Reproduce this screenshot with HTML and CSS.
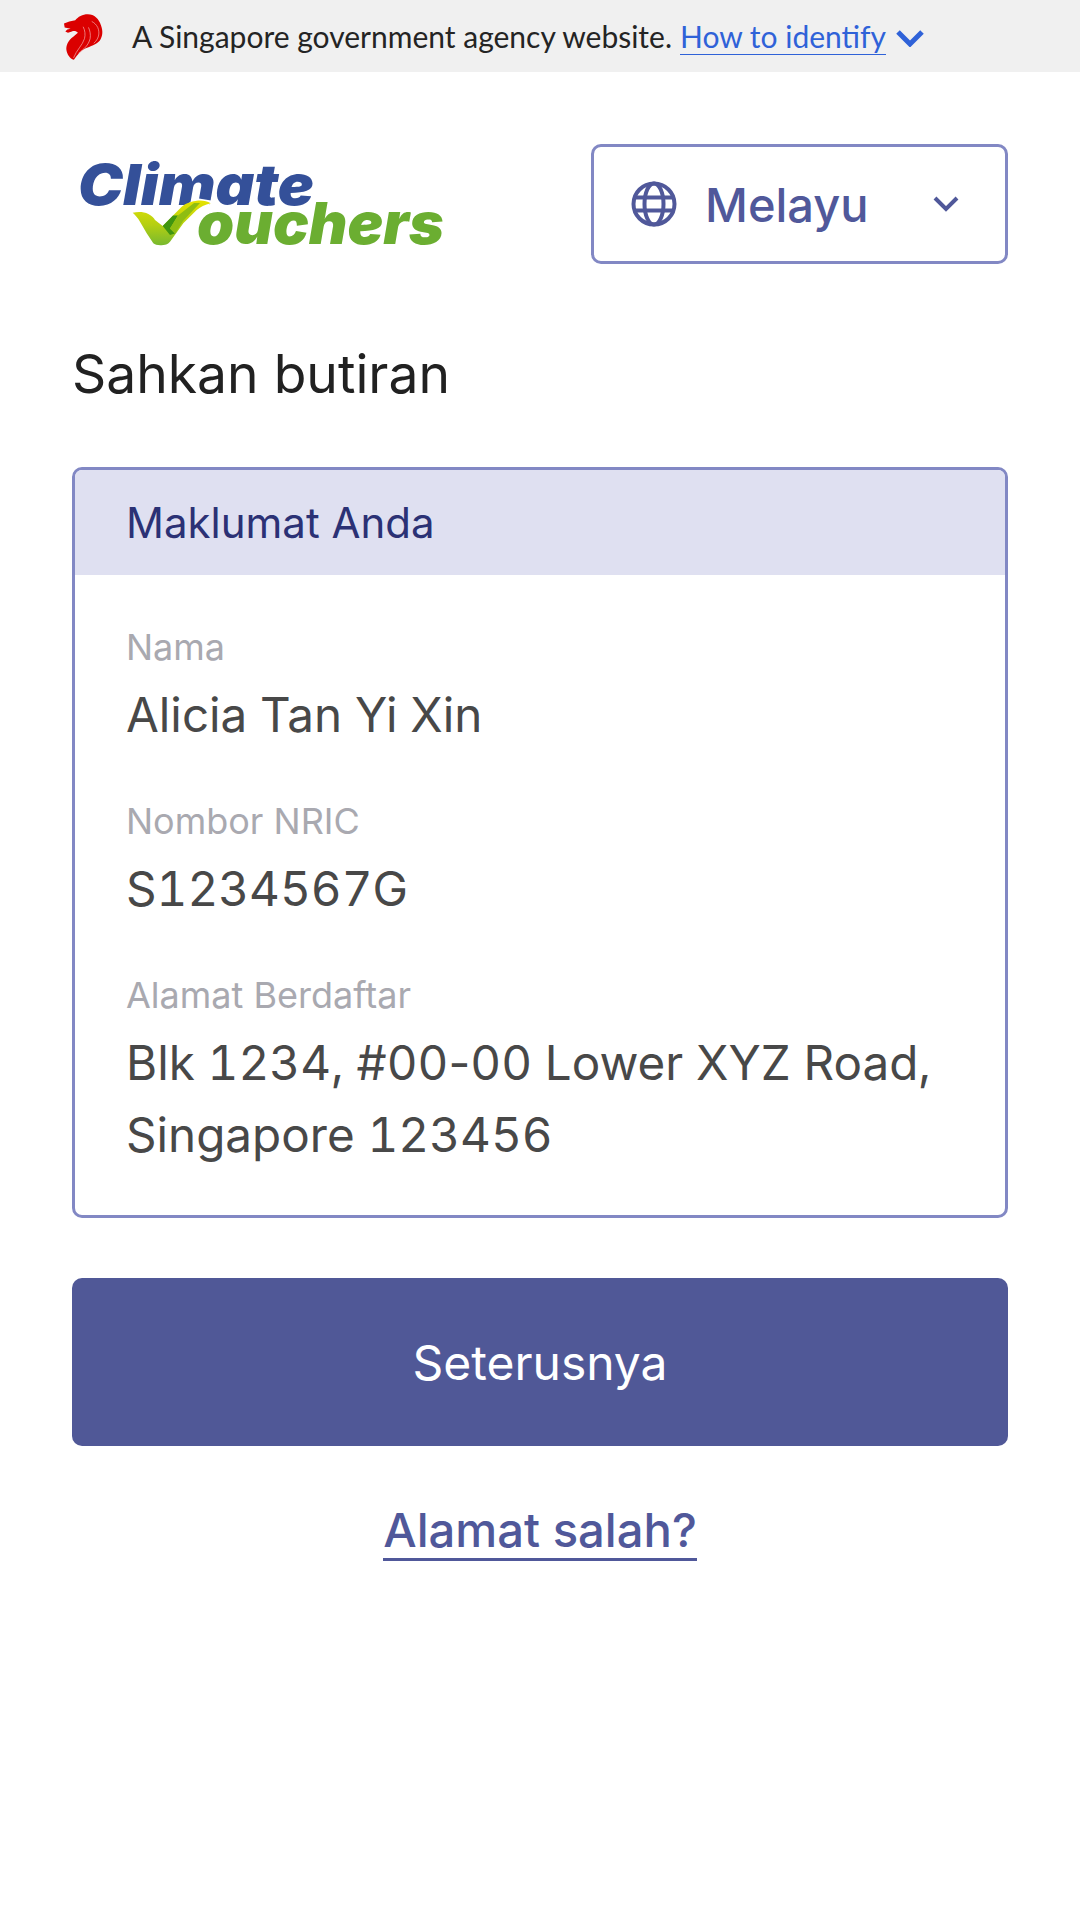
FILE: index.html
```html
<!DOCTYPE html>
<html lang="ms">
<head>
<meta charset="UTF-8">
<meta name="viewport" content="width=device-width, initial-scale=1.0">
<title>Climate Vouchers</title>
<link rel="stylesheet" href="styles.css">
</head>
<body>
<div class="masthead">
  <svg class="lion" viewBox="28 18 118 138">
    <path fill="#db0000" d="M28 46 L44 40 L62 36 C70 26 84 18 100 18 C120 18 134 32 140 52 C146 68 146 84 136 98 C126 110 108 114 92 122 C78 129 68 142 58 156 C50 154 40 146 36 130 C32 112 42 96 56 86 L70 74 C66 70 60 68 52 70 L40 74 L32 70 L38 64 L48 62 L30 58 Z"/>
    <g fill="none" stroke="#f3b4b4" stroke-width="2">
      <path d="M57 150 C66 126 84 112 90 92 C93 80 92 68 86 56"/>
      <path d="M72 136 C88 124 102 112 107 92 C109 80 107 68 102 58"/>
      <path d="M118 106 C132 94 138 76 130 58 C126 50 120 44 112 40"/>
    </g>
  </svg>
  <span class="masthead-text">A Singapore government agency website.</span>
  <a class="masthead-link">How to identify</a>
  <svg class="masthead-chevron" viewBox="0 0 28 18"><path fill="none" stroke="#2f62d8" stroke-width="5" d="M2 3 L14 15 L26 3"/></svg>
</div>

<div class="page">
  <div class="top-row">
    <svg class="logo" viewBox="0 0 380 119">
      <defs>
        <linearGradient id="tick" x1="0" y1="0" x2="0" y2="1">
          <stop offset="0" stop-color="#e6e200"/>
          <stop offset="0.55" stop-color="#b4cf12"/>
          <stop offset="1" stop-color="#78b92f"/>
        </linearGradient>
      </defs>
      <text class="logo-climate" x="6" y="60" textLength="236" lengthAdjust="spacingAndGlyphs">Climate</text>
      <text class="logo-ouchers" x="125" y="99" textLength="247" lengthAdjust="spacingAndGlyphs">ouchers</text>
      <path fill="#fff" d="M58 65 L78 66 L90 77 L124 53 L142 56 L112 82 L99 101 L80 101 Z"/>
      <path fill="url(#tick)" d="M60.7 67.7 C67 66.5 72 67 76.3 69 C80 71 82 73 83 75 L90.7 81 L109.7 61.7 C114 58 119 56.5 124.7 55.7 C130 55 135 56 138.7 58.3 C133 60 128 62 124.7 65 L111.3 78.3 L98 96.7 C96 99 94 100 91.3 100 C87 100.5 83 100 81.3 98.3 L74.7 88.3 L68 76.7 C66 73 63 70 60.7 67.7 Z"/>
      <path fill="#3f9510" d="M90.7 81 L101 70.5 L106 70.5 L98 83.5 L103 88.5 L98 90 Z"/>
      <path fill="#8fbd12" d="M106 70.5 L122 58 L128 58 L111 76 L103 88.5 L98 83.5 Z"/>
    </svg>
    <div class="lang">
      <svg class="globe" viewBox="0 0 46 46">
        <g fill="none" stroke="#50589a" stroke-width="4">
          <circle cx="23" cy="23" r="20.5"/>
          <ellipse cx="23" cy="23" rx="9.5" ry="20.5"/>
          <path d="M3 16.5 H43 M3 29.5 H43"/>
        </g>
      </svg>
      <span class="lang-name">Melayu</span>
      <svg class="lang-chevron" viewBox="0 0 26 18"><path fill="none" stroke="#50589a" stroke-width="4" d="M2 3 L13 14 L24 3"/></svg>
    </div>
  </div>

  <h1 class="title">Sahkan butiran</h1>

  <div class="card">
    <div class="card-head">Maklumat Anda</div>
    <div class="card-body">
      <div class="field">
        <div class="label">Nama</div>
        <div class="value">Alicia Tan Yi Xin</div>
      </div>
      <div class="field">
        <div class="label">Nombor NRIC</div>
        <div class="value">S1234567G</div>
      </div>
      <div class="field">
        <div class="label">Alamat Berdaftar</div>
        <div class="value">Blk 1234, #00<span class="hyphen">-</span>00 Lower XYZ Road, Singapore 123456</div>
      </div>
    </div>
  </div>

  <button class="next-btn">Seterusnya</button>
  <div class="wrong-row"><a class="wrong-link">Alamat salah?</a></div>
</div>
</body>
</html>
```

FILE: styles.css
```css
* {
  box-sizing: border-box;
}

body {
  margin: 0;
  background: #fff;
  font-family: "Inter", "Noto Sans", sans-serif;
}

/* gov banner */
.masthead {
  height: 72px;
  background: #f0f0f0;
  display: flex;
  align-items: center;
  padding-left: 64px;
  font-family: "Lato", sans-serif;
  font-size: 30px;
}

.lion {
  width: 39px;
  height: 46px;
  margin: 2px 29px 0 0;
}

.masthead-text {
  color: #242424;
}

.masthead-link {
  color: #2f62d8;
  margin-left: 8px;
  border-bottom: 1px solid #2f62d8;
  line-height: 36px;
}

.masthead-chevron {
  width: 28px;
  height: 18px;
  margin-left: 10px;
  margin-top: 4px;
}

.page {
  padding: 72px 72px 0;
}

.top-row {
  display: flex;
  justify-content: space-between;
  align-items: center;
}

.logo {
  width: 380px;
  height: 119px;
}

.logo-climate {
  font: italic 900 56px "Inter", sans-serif;
  fill: #345099;
}

.logo-ouchers {
  font: italic 900 58px "Inter", sans-serif;
  fill: #6bae31;
}

.lang {
  width: 417px;
  height: 120px;
  border: 3px solid #8288c4;
  border-radius: 10px;
  display: flex;
  align-items: center;
  padding: 0 46px 0 37px;
  color: #50589a;
}

.globe {
  width: 46px;
  height: 46px;
  margin-right: 28px;
}

.lang-name {
  font-size: 47px;
  font-weight: 500;
  flex: 1;
}

.lang-chevron {
  width: 26px;
  height: 18px;
}

.title {
  margin: 78px 0 61px;
  font-size: 53.4px;
  font-weight: 400;
  line-height: 64px;
  color: #212121;
}

.card {
  border: 3px solid #8288c4;
  border-radius: 10px;
  overflow: hidden;
}

.card-head {
  height: 105px;
  background: #dfe0f1;
  display: flex;
  align-items: center;
  padding-left: 51px;
  font-size: 42px;
  color: #2b3175;
}

.card-body {
  padding: 48px 51px 44px;
}

.field {
  margin-bottom: 46px;
}

.field:last-child {
  margin-bottom: 0;
}

.label {
  font-size: 36px;
  line-height: 48px;
  color: #a9a9b0;
}

.value {
  margin-top: 8px;
  font-size: 47.6px;
  line-height: 72px;
  color: #484848;
  font-variant-numeric: tabular-nums;
}

.hyphen {
  display: inline-block;
  font-variant-numeric: normal;
}

.next-btn {
  display: block;
  width: 100%;
  height: 168px;
  margin-top: 60px;
  border: none;
  border-radius: 10px;
  background: #505897;
  color: #fff;
  font-family: inherit;
  font-size: 48px;
}

.wrong-row {
  margin-top: 56px;
  text-align: center;
}

.wrong-link {
  display: inline-block;
  font-size: 47.2px;
  font-weight: 500;
  line-height: 56px;
  color: #50589a;
  border-bottom: 3px solid #50589a;
}
```
